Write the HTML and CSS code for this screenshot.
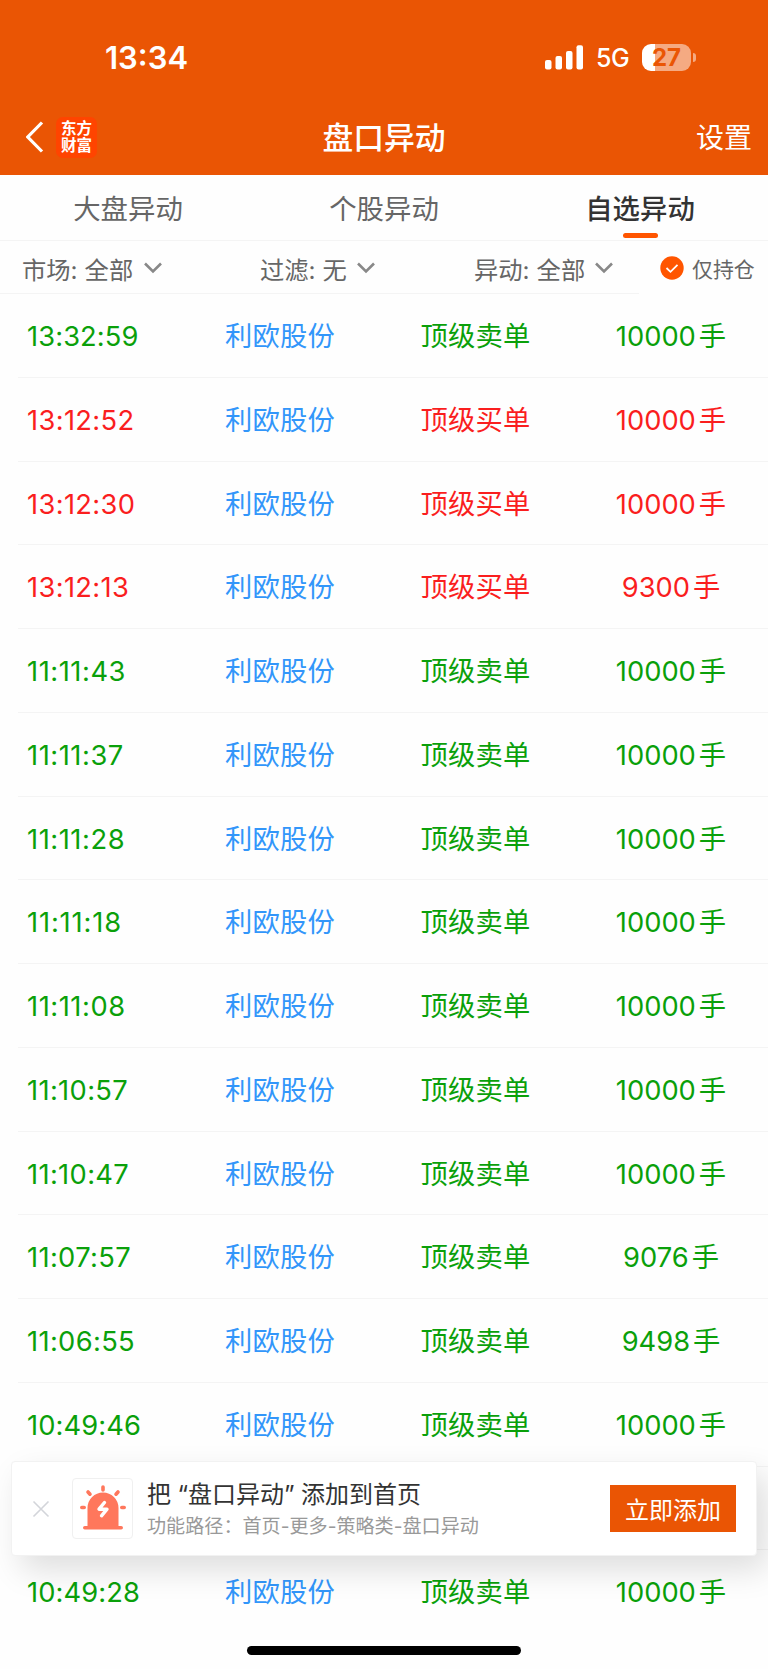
FILE: index.html
```html
<!DOCTYPE html>
<html lang="zh-CN">

<head>
    <meta charset="UTF-8">
    <meta name="viewport" content="width=device-width, initial-scale=1.0">
    <title>盘口异动</title>
    <link rel="stylesheet" href="styles.css">
</head>

<body>
    <header class="header">
        <div class="status">
            <span class="clock">13:34</span>
            <svg class="signal" width="38" height="25" viewBox="0 0 38 25" fill="#fff">
                <rect x="0" y="15" width="6.5" height="9.5" rx="2" />
                <rect x="10.5" y="11" width="6.5" height="13.5" rx="2" />
                <rect x="21" y="6" width="6.5" height="18.5" rx="2" />
                <rect x="31.5" y="0.3" width="6.5" height="24.2" rx="2" />
            </svg>
            <span class="network">5G</span>
            <div class="battery"><span>27</span></div>
            <i class="battery-tip"></i>
        </div>
        <div class="nav">
            <svg class="back" width="18" height="32" viewBox="0 0 18 32" fill="none" stroke="#fff" stroke-width="3.2">
                <path d="M16 1.5L1.800 16L16 30.500" />
            </svg>
            <div class="logo">东方<br>财富</div>
            <h1 class="title">盘口异动</h1>
            <span class="setting">设置</span>
        </div>
    </header>

    <nav class="tabs">
        <span class="tab">大盘异动</span>
        <span class="tab">个股异动</span>
        <span class="tab active">自选异动</span>
    </nav>

    <div class="filters">
        <div class="filter market">
            <span>市场<b>:</b>全部</span>
            <svg class="arrow" width="18" height="12" viewBox="0 0 18 12"><path d="M1 1.5L9 9.5L17 1.5" /></svg>
        </div>
        <div class="filter rule">
            <span>过滤<b>:</b>无</span>
            <svg class="arrow" width="18" height="12" viewBox="0 0 18 12"><path d="M1 1.5L9 9.5L17 1.5" /></svg>
        </div>
        <div class="filter change">
            <span>异动<b>:</b>全部</span>
            <svg class="arrow" width="18" height="12" viewBox="0 0 18 12"><path d="M1 1.5L9 9.5L17 1.5" /></svg>
        </div>
        <div class="holding">
            <svg width="24" height="24" viewBox="0 0 24 24">
                <circle cx="12" cy="12" r="11.7" fill="#ff5500" />
                <path d="M6.5 12L10.5 15.8L17.5 8.8" fill="none" stroke="#fff" stroke-width="1.8" />
            </svg>
            <span>仅持仓</span>
        </div>
    </div>

    <main class="list">
        <div class="row sell"><span class="time">13:32:59</span><span class="name">利欧股份</span><span class="type">顶级卖单</span><span class="qty"><b>10000</b>手</span></div>
        <div class="row buy"><span class="time wide">13:12:52</span><span class="name">利欧股份</span><span class="type">顶级买单</span><span class="qty"><b>10000</b>手</span></div>
        <div class="row buy"><span class="time wide">13:12:30</span><span class="name">利欧股份</span><span class="type">顶级买单</span><span class="qty"><b>10000</b>手</span></div>
        <div class="row buy"><span class="time wide">13:12:13</span><span class="name">利欧股份</span><span class="type">顶级买单</span><span class="qty"><b>9300</b>手</span></div>
        <div class="row sell"><span class="time wider">11:11:43</span><span class="name">利欧股份</span><span class="type">顶级卖单</span><span class="qty"><b>10000</b>手</span></div>
        <div class="row sell"><span class="time wider">11:11:37</span><span class="name">利欧股份</span><span class="type">顶级卖单</span><span class="qty"><b>10000</b>手</span></div>
        <div class="row sell"><span class="time wider">11:11:28</span><span class="name">利欧股份</span><span class="type">顶级卖单</span><span class="qty"><b>10000</b>手</span></div>
        <div class="row sell"><span class="time widest">11:11:18</span><span class="name">利欧股份</span><span class="type">顶级卖单</span><span class="qty"><b>10000</b>手</span></div>
        <div class="row sell"><span class="time wider">11:11:08</span><span class="name">利欧股份</span><span class="type">顶级卖单</span><span class="qty"><b>10000</b>手</span></div>
        <div class="row sell"><span class="time wide">11:10:57</span><span class="name">利欧股份</span><span class="type">顶级卖单</span><span class="qty"><b>10000</b>手</span></div>
        <div class="row sell"><span class="time wide">11:10:47</span><span class="name">利欧股份</span><span class="type">顶级卖单</span><span class="qty"><b>10000</b>手</span></div>
        <div class="row sell"><span class="time wide">11:07:57</span><span class="name">利欧股份</span><span class="type">顶级卖单</span><span class="qty"><b>9076</b>手</span></div>
        <div class="row sell"><span class="time wide">11:06:55</span><span class="name">利欧股份</span><span class="type">顶级卖单</span><span class="qty"><b>9498</b>手</span></div>
        <div class="row sell"><span class="time">10:49:46</span><span class="name">利欧股份</span><span class="type">顶级卖单</span><span class="qty"><b>10000</b>手</span></div>
        <div class="row"></div>
        <div class="row sell last"><span class="time">10:49:28</span><span class="name">利欧股份</span><span class="type">顶级卖单</span><span class="qty"><b>10000</b>手</span></div>
    </main>

    <!-- add to home tip -->
    <div class="tip">
        <svg class="close" width="18" height="18" viewBox="0 0 18 18" fill="none" stroke="#d3d5da" stroke-width="1.6">
            <path d="M1.5 1.5L16.5 16.5M16.5 1.5L1.5 16.5" />
        </svg>
        <div class="tip-icon">
            <svg width="46" height="46" viewBox="0 0 46 46" fill="#ff775c">
                <path d="M7.5 41V23a15.5 15.5 0 0 1 31 0v18h2.700a1.800 1.800 0 0 1 0 3.600H4.800a1.800 1.800 0 0 1 0-3.600z" />
                <path d="M23 2v3M8 7l2 2.200M38 7l-2 2.200M1.800 22.500h2.400M41.800 22.500h2.400" fill="none" stroke="#ff775c" stroke-width="3.600" stroke-linecap="round" />
                <path d="M24.500 17.500L19 24.200h8L21.500 30.800" fill="none" stroke="#fff" stroke-width="3.400" stroke-linecap="round" stroke-linejoin="round" />
            </svg>
        </div>
        <div class="tip-text">
            <p class="tip-title">把<i class="open">“</i>盘口异动<i class="shut">”</i>添加到首页</p>
            <p class="tip-path">功能路径：首页-更多-策略类-盘口异动</p>
        </div>
        <button class="add-btn">立即添加</button>
    </div>
    <div class="home-bar"></div>
</body>

</html>
```
FILE: styles.css
```css
* {
    box-sizing: border-box;
}

body {
    position: relative;
    height: 1669px;
    margin: 0;
    overflow: hidden;
    background-color: #fefefe;
    color: #666;
    font-family: Inter, "Noto Sans CJK SC", sans-serif;
    white-space: nowrap;
}

b, i {
    font-weight: inherit;
    font-style: normal;
}

svg {
    display: block;
    flex: none;
}

.header {
    height: 175px;
    background-color: #ea5504;
    color: #fff;
}

.status {
    display: flex;
    align-items: center;
    height: 99px;
    padding: 15px 0 0 105px;
}

.clock {
    width: 440px;
    font-size: 31px;
    font-weight: 600;
}

.network {
    width: 46px;
    margin-left: 13px;
    padding-top: 2px;
    font-size: 25px;
    font-weight: 500;
    letter-spacing: -0.5px;
}

.battery {
    width: 49px;
    height: 27px;
    border-radius: 9px;
    background: linear-gradient(90deg, #fff 13px, #f5aa82 13px);
    color: #ea5504;
    font-size: 24px;
    font-weight: 700;
    line-height: 27px;
    text-align: center;
}

.battery-tip {
    width: 3px;
    height: 9px;
    margin-left: 2px;
    border-radius: 0 4px 4px 0;
    background-color: #f5aa82;
}

.nav {
    display: flex;
    align-items: center;
    height: 76px;
    padding: 0 16px 0 26px;
}

.logo {
    width: 41px;
    height: 41px;
    margin-left: 12px;
    padding-top: 3px;
    border-radius: 7px;
    background-color: #ff4400;
    font-size: 15.5px;
    font-weight: 700;
    line-height: 17px;
    text-align: center;
}

.title {
    width: 574px;
    margin: 0;
    padding-bottom: 4px;
    text-align: center;
    font-size: 30.8px;
    font-weight: 500;
}

.setting {
    margin-left: auto;
    padding-bottom: 2px;
    font-size: 28px;
}

.tabs {
    display: flex;
    height: 66px;
    border-bottom: 1px solid #f4f4f4;
}

.tab {
    position: relative;
    flex: 1;
    font-size: 27.4px;
    line-height: 69px;
    text-align: center;
}

.active {
    color: #333;
    font-weight: 500;
}

.active::after {
    content: "";
    position: absolute;
    left: 111px;
    bottom: 2px;
    width: 35px;
    height: 5px;
    border-radius: 3px;
    background-color: #ff5500;
}

.filters {
    display: flex;
    height: 53px;
    font-size: 24.3px;
}

.filter {
    display: flex;
    align-items: center;
    justify-content: space-between;
    border-bottom: 1px solid #f4f4f4;
}

.filter span {
    padding-top: 2px;
}

.filter b {
    display: inline-block;
    width: 14px;
}

.market {
    width: 237px;
    padding: 0 75px 0 22px;
}

.rule {
    width: 223px;
    padding: 0 85px 0 23px;
}

.change {
    width: 179px;
    padding: 0 26px 0 14px;
}

.arrow {
    margin-top: 2px;
    fill: none;
    stroke: #888;
    stroke-width: 2.6;
}

.holding {
    display: flex;
    align-items: center;
    padding-left: 21px;
    font-size: 20.9px;
}

.holding span {
    margin-left: 8px;
}

.list {
    padding-left: 18px;
}

.row {
    display: grid;
    grid-template-columns: 207px 195.5px 99.5px 1fr;
    height: 83.75px;
    border-bottom: 1px solid #f4f4f4;
    font-size: 27.3px;
    line-height: 85px;
}

.last {
    border-bottom: none;
}

.time {
    padding-left: 9px;
    letter-spacing: 0.1px;
}

/* times with many 1s come out too tight */
.wide {
    letter-spacing: 0.35px;
}

.wider {
    letter-spacing: 0.55px;
}

.widest {
    letter-spacing: 0.85px;
}

.name, .type {
    letter-spacing: 0.2px;
}

.name {
    color: #3296fa;
}

.qty {
    padding-left: 54px;
    text-align: center;
}

.qty b {
    margin-right: 3px;
}

.sell {
    color: #0aa00a;
}

.buy {
    color: #fa1e1e;
}

.tip {
    position: absolute;
    left: 11px;
    top: 1461px;
    display: flex;
    align-items: center;
    width: 746px;
    height: 95px;
    padding: 0 20px;
    border: 1px solid #f2f2f2;
    border-radius: 4px;
    background-color: #fff;
    box-shadow: 10px 14px 32px rgba(0, 0, 0, 0.13);
}

.tip-icon {
    width: 61px;
    height: 61px;
    margin-left: 22px;
    padding: 6px 7px;
    border: 1px solid #f0f0f0;
    border-radius: 4px;
}

.tip-text {
    margin-left: 14px;
    padding-top: 2px;
}

.tip-text p {
    margin: 0;
}

.tip-title {
    color: #333;
    font-size: 24px;
    line-height: 34px;
}

.tip-title i {
    display: inline-block;
    width: 17px;
}

.tip-title .open {
    text-align: right;
}

.tip-path {
    color: #999;
    font-size: 19.1px;
    line-height: 29px;
}

.add-btn {
    width: 126px;
    height: 47px;
    margin-left: auto;
    padding: 0;
    border: none;
    background-color: #ea5504;
    color: #fff;
    font-family: inherit;
    font-size: 24px;
}

.home-bar {
    position: absolute;
    left: 247px;
    bottom: 14px;
    width: 274px;
    height: 9px;
    border-radius: 5px;
    background-color: #000;
}
```
